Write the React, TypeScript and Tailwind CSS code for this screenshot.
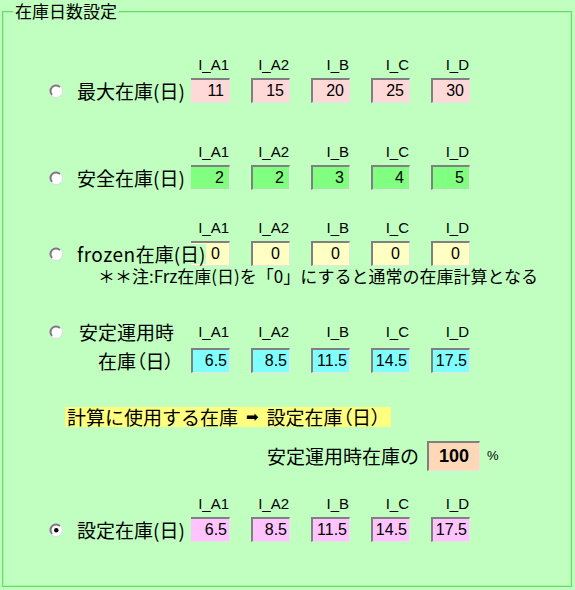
import React from "react";

const cols = ["I_A1", "I_A2", "I_B", "I_C", "I_D"];

const jp = "font-['Noto_Sans_CJK_JP',sans-serif]";
const palt = "[font-feature-settings:'palt']";
const latin = "font-['Liberation_Sans','Noto_Sans_CJK_JP',sans-serif]";

const Radio = ({ checked }: { checked?: boolean }) => (
  <svg width="14" height="14" viewBox="0 0 14 14" className="shrink-0">
    <circle cx="7" cy="7" r="6.5" fill="#ffffff" stroke="#dcdcdc" strokeWidth="1" />
    <path d="M3.1 10.9 A5.5 5.5 0 0 1 10.9 3.1" stroke="#7a7a7a" strokeWidth="2" fill="none" />
    {checked && <circle cx="7.3" cy="7.3" r="2.2" fill="#000000" />}
  </svg>
);

const ValueBox = ({ value, bg, noLeft, pr }: { value: string; bg: string; noLeft?: boolean; pr: string }) => (
  <div
    className={`w-[39px] h-[25px] box-border border-t-2 border-t-[#808080] border-r border-r-[#e4e4e4] border-b border-b-[#e4e4e4] ${
      noLeft ? "border-l-0" : "border-l-2 border-l-[#808080]"
    } ${bg} ${pr} ${latin} text-[16px] leading-[21px] text-right text-black`}
  >
    {value}
  </div>
);

const Header = () => (
  <div className="flex gap-[21px] h-[20px]">
    {cols.map((c) => (
      <div key={c} className={`w-[39px] text-right pr-[1px] ${latin} text-[15px] leading-[20px] text-black`}>
        {c}
      </div>
    ))}
  </div>
);

const Boxes = ({
  values,
  bg,
  firstNoLeft,
  pr = "pr-[3px]",
}: {
  values: string[];
  bg: string;
  firstNoLeft?: boolean;
  pr?: string;
}) => (
  <div className="flex gap-[21px]">
    {values.map((v, i) => (
      <ValueBox key={i} value={v} bg={bg} pr={pr} noLeft={firstNoLeft && i === 0} />
    ))}
  </div>
);

const Block = ({
  label,
  values,
  bg,
  pr,
  checked,
  className,
}: {
  label: React.ReactNode;
  values: string[];
  bg: string;
  pr?: string;
  checked?: boolean;
  className?: string;
}) => (
  <div className={className}>
    <div className="flex">
      <div className="w-[142px] shrink-0" />
      <Header />
    </div>
    <div className="flex items-center mt-[3px]">
      <div className="w-[142px] shrink-0 flex items-center">
        <Radio checked={checked} />
        <span
          className={`relative z-10 ml-[14px] bg-[#c0ffc0] text-[19px] leading-[20px] text-black whitespace-nowrap ${jp} ${palt}`}
        >
          {label}
        </span>
      </div>
      <Boxes values={values} bg={bg} pr={pr} firstNoLeft />
    </div>
  </div>
);

export default function App() {
  return (
    <div className="w-[575px] h-[590px] bg-[#c0ffc0] overflow-hidden">
      <fieldset className="ml-[2px] w-[570px] h-[587px] box-border border border-[#66dd66] shadow-[inset_1px_1px_0_#a8f4a8,inset_-1px_-1px_0_#a8f4a8] p-0 m-0">
        <legend className={`ml-[10px] px-[2px] text-[17px] leading-[22px] text-black ${jp}`}>在庫日数設定</legend>
        <div className="pl-[46px]">
          <Block
            className="mt-[33px]"
            label="最大在庫(日)"
            values={["11", "15", "20", "25", "30"]}
            bg="bg-[#ffd8d8]"
            pr="pr-[5px]"
          />
          <Block
            className="mt-[39px]"
            label="安全在庫(日)"
            values={["2", "2", "3", "4", "5"]}
            bg="bg-[#80ff80]"
            pr="pr-[5px]"
          />
          <Block
            className="mt-[28px]"
            label={
              <>
                <span className="tracking-[0.5px]">frozen</span>在庫(日)
              </>
            }
            values={["0", "0", "0", "0", "0"]}
            bg="bg-[#ffffc4]"
            pr="pr-[9px]"
          />
          <div className={`ml-[49px] h-[20px] text-[17px] leading-[20px] text-black whitespace-nowrap ${jp}`}>
            ＊＊注:Frz在庫(日)を「0」にすると通常の在庫計算となる
          </div>

          <div className="mt-[36px] flex">
            <div className="w-[142px] shrink-0 flex">
              <div className="h-[20px] flex items-center">
                <Radio />
              </div>
              <div className={`ml-[15px] w-[96px] text-right text-[19px] text-black whitespace-nowrap ${jp} ${palt}`}>
                <div className="h-[20px] leading-[20px]">安定運用時</div>
                <div className="mt-[6px] h-[25px] leading-[25px]">在庫（日）</div>
              </div>
            </div>
            <div>
              <Header />
              <div className="mt-[6px]">
                <Boxes values={["6.5", "8.5", "11.5", "14.5", "17.5"]} bg="bg-[#80ffff]" pr="pr-[2px]" />
              </div>
            </div>
          </div>

          <div className="mt-[34px] ml-[16px]">
            <span
              className={`inline-flex items-center h-[20px] bg-[#ffff80] pl-[2px] pr-[10px] text-[19px] leading-[20px] text-black whitespace-nowrap ${jp}`}
            >
              計算に使用する在庫
              <span className="mx-[8px] font-['DejaVu_Sans',sans-serif] text-[15px]">➡</span>
              設定在庫
              <span className={palt}>（日）</span>
            </span>
          </div>

          <div className="mt-[10px] ml-[218px] flex items-center h-[30px]">
            <span className={`text-[19px] leading-[30px] text-black whitespace-nowrap ${jp}`}>安定運用時在庫の</span>
            <div
              className={`ml-[8px] w-[53px] h-[30px] box-border border-t-2 border-l-2 border-t-[#808080] border-l-[#808080] border-r border-b border-r-[#e4e4e4] border-b-[#e4e4e4] bg-[#ffd8b8] ${latin} font-bold text-[18px] leading-[27px] text-center text-black`}
            >
              100
            </div>
            <span className={`ml-[7px] text-[13px] text-black ${latin}`}>%</span>
          </div>

          <Block
            className="mt-[23px]"
            label="設定在庫(日)"
            values={["6.5", "8.5", "11.5", "14.5", "17.5"]}
            bg="bg-[#ffc4ff]"
            pr="pr-[2px]"
            checked
          />
        </div>
      </fieldset>
    </div>
  );
}
